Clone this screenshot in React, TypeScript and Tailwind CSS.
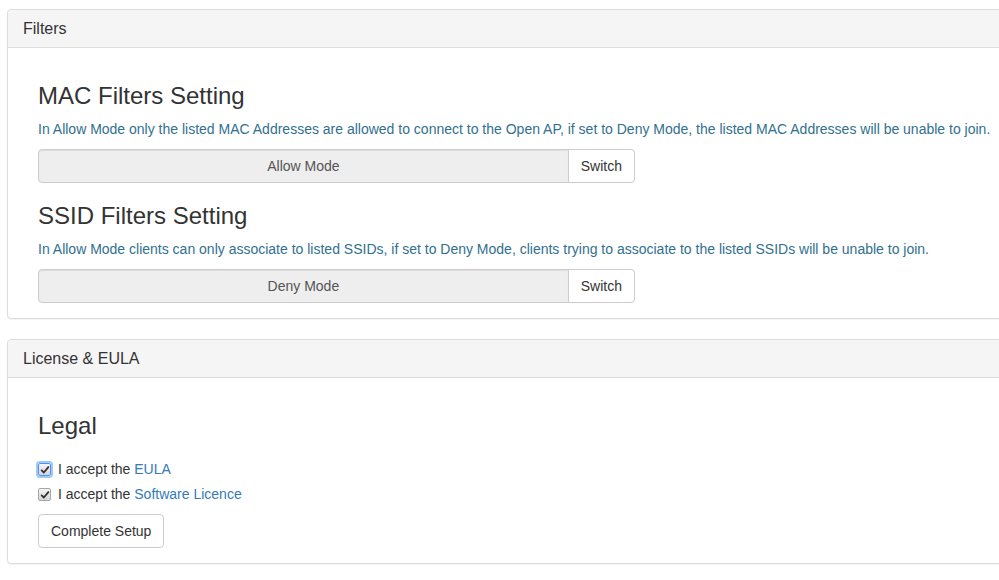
import React from "react"

const font = { fontFamily: '"Liberation Sans", Arial, sans-serif' }

function Panel({ title, children }: { title: string; children: React.ReactNode }) {
  return (
    <div className="mb-5 ml-[7px] mt-[9px] w-[1100px] rounded border border-[#ddd] bg-white shadow-[0_1px_1px_rgba(0,0,0,0.05)]">
      <div className="rounded-t border-b border-[#ddd] bg-[#f5f5f5] px-[15px] py-[10px] text-[16px] leading-[17px] text-[#333]">
        {title}
      </div>
      <div className="p-[15px]">
        <div className="px-[15px]">{children}</div>
      </div>
    </div>
  )
}

function ModeGroup({ mode }: { mode: string }) {
  return (
    <div className="flex h-[34px] w-[597px]">
      <div className="flex flex-1 items-center justify-center rounded-l border border-[#ccc] bg-[#eee] text-[14px] text-[#555] shadow-[inset_0_1px_1px_rgba(0,0,0,0.075)]">
        {mode}
      </div>
      <button className="-ml-px rounded-r border border-[#ccc] bg-white px-3 text-[14px] text-[#333]">
        Switch
      </button>
    </div>
  )
}

function Check({ focused }: { focused?: boolean }) {
  return (
    <span
      className={`mr-[7px] mt-[1px] flex h-[13px] w-[13px] items-center justify-center rounded-[2px] border bg-gradient-to-b from-[#f4f4f4] to-[#d6d6d6] ${
        focused ? "border-[#4d90fe] outline outline-2 outline-[#9ecaed]" : "border-[#a6a6a6]"
      }`}
    >
      <svg viewBox="0 0 12 12" className="h-[10px] w-[10px]">
        <path d="M2 6.5 L4.6 9 L10 2.5" fill="none" stroke="#333" strokeWidth="2.2" strokeLinecap="round" strokeLinejoin="round" />
      </svg>
    </span>
  )
}

export default function App() {
  return (
    <div className="h-[580px] w-[999px] overflow-hidden bg-white pt-px" style={font}>
      <div className="-mt-px">
        <Panel title="Filters">
          <h3 className="mb-[10px] mt-5 text-[24px] leading-[26px] text-[#333]">MAC Filters Setting</h3>
          <p className="mb-[10px] whitespace-nowrap text-[14px] leading-5 text-[#31708f]">
            In Allow Mode only the listed MAC Addresses are allowed to connect to the Open AP, if set to Deny Mode, the listed MAC Addresses will be unable to join.
          </p>
          <ModeGroup mode="Allow Mode" />
          <h3 className="mb-[10px] mt-5 text-[24px] leading-[26px] text-[#333]">SSID Filters Setting</h3>
          <p className="mb-[10px] whitespace-nowrap text-[14px] leading-5 text-[#31708f]">
            In Allow Mode clients can only associate to listed SSIDs, if set to Deny Mode, clients trying to associate to the listed SSIDs will be unable to join.
          </p>
          <ModeGroup mode="Deny Mode" />
        </Panel>
        <Panel title="License & EULA">
          <h3 className="mb-5 mt-5 text-[24px] leading-[26px] text-[#333]">Legal</h3>
          <label className="flex h-5 items-center text-[14px] text-[#333]">
            <Check focused />
            I accept the&nbsp;<a className="text-[#337ab7]">EULA</a>
          </label>
          <label className="mb-[10px] mt-[5px] flex h-5 items-center text-[14px] text-[#333]">
            <Check />
            I accept the&nbsp;<a className="text-[#337ab7]">Software Licence</a>
          </label>
          <button className="h-[34px] rounded border border-[#ccc] bg-white px-3 text-[14px] text-[#333]">
            Complete Setup
          </button>
        </Panel>
      </div>
    </div>
  )
}
